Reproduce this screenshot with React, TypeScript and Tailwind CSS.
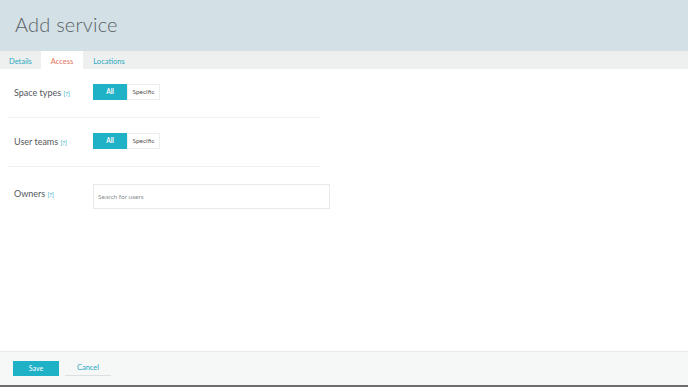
export default function App() {
  const rows = [
    { label: "Space types", kind: "toggle" },
    { label: "User teams", kind: "toggle" },
  ];

  return (
    <div className="w-[688px] h-[387px] flex flex-col bg-white overflow-hidden font-['Lato','Open_Sans',sans-serif]">
      {/* header */}
      <div className="h-[51px] shrink-0 bg-[#d3e0e5] flex items-center px-[15px]">
        <h1 className="text-[20px] font-light text-[#5a6266] tracking-[0.2px] -mt-[4px]">Add service</h1>
      </div>

      {/* tabs */}
      <div className="h-[18px] shrink-0 bg-[#eef0f0] flex text-[7.5px]">
        <div className="px-[9px] pt-[3px] flex items-center text-[#2aa9c0]">Details</div>
        <div className="px-[10px] pt-[3px] flex items-center bg-white text-[#e2725b]">Access</div>
        <div className="px-[10px] pt-[3px] flex items-center text-[#2aa9c0]">Locations</div>
      </div>

      {/* content */}
      <div className="flex-1 flex flex-col">
        {rows.map((r) => (
          <div key={r.label} className="mx-[8px] w-[312px] border-b border-[#f1f2f2] pt-[15px] pb-[17px] flex items-center">
            <div className="w-[85px] pl-[6px] pt-[1px] text-[9px] text-[#55595c]">
              {r.label} <span className="text-[6px] text-[#1fa9c0]">[?]</span>
            </div>
            <div className="flex h-[16px]">
              <div className="w-[34px] bg-[#1fb1c6] text-white text-[6.5px] font-bold flex items-center justify-center">All</div>
              <div className="w-[33px] border border-[#eceeee] bg-white text-[#555] text-[6.5px] flex items-center justify-center">Specific</div>
            </div>
          </div>
        ))}
        <div className="mx-[8px] pt-[17px] flex items-start">
          <div className="w-[85px] pl-[6px] pt-[3px] text-[9px] text-[#55595c]">
            Owners <span className="text-[6px] text-[#1fa9c0]">[?]</span>
          </div>
          <div className="w-[237px] h-[25px] border border-[#e8eaea] bg-white flex items-center px-[4px] text-[6.5px] text-[#8a8f92]">
            Search for users
          </div>
        </div>
      </div>

      {/* footer */}
      <div className="h-[34px] shrink-0 border-t border-[#e6eaea] bg-[#f6f7f7] flex items-center px-[13px] gap-[6px]">
        <div className="w-[46px] h-[15px] bg-[#1fb1c6] text-white text-[7px] flex items-center justify-center">Save</div>
        <div className="w-[46px] h-[15px] border-b border-[#dcdfe0] text-[#2aa9c0] text-[7.5px] flex items-center justify-center">Cancel</div>
      </div>
      <div className="h-[2px] shrink-0 bg-[#6d6d6d]" />
    </div>
  );
}
